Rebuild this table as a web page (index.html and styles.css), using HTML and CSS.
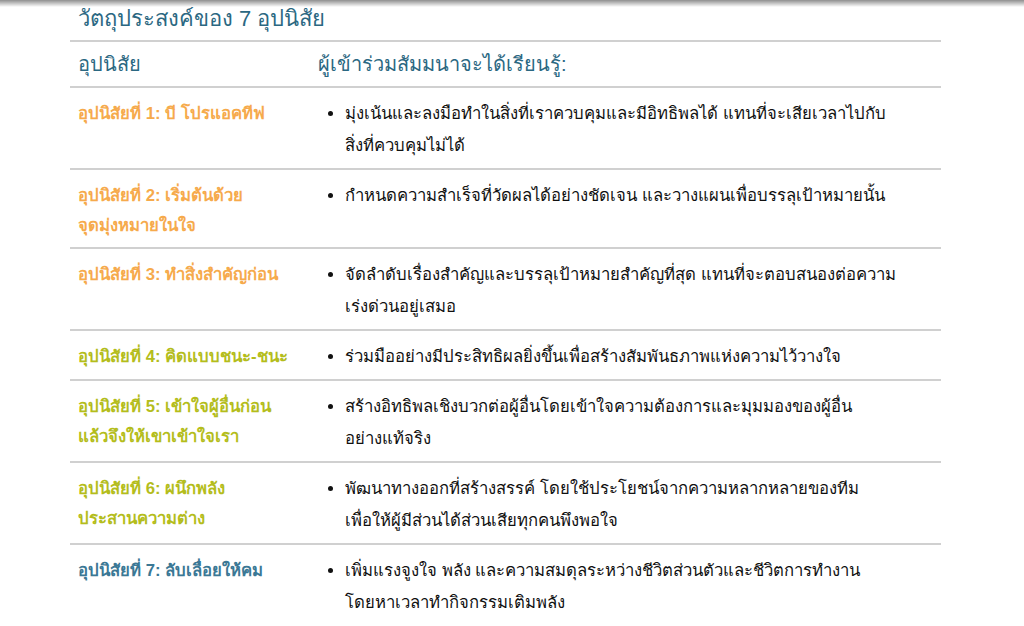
FILE: index.html
```html
<!DOCTYPE html>
<html lang="th">
<head>
<meta charset="utf-8">
<link rel="stylesheet" href="styles.css">
</head>
<body>
<div class="topshadow"></div>
<main class="wrap">
  <h2 class="title">วัตถุประสงค์ของ 7 อุปนิสัย</h2>
  <table class="habits">
    <thead>
      <tr><th class="c1">อุปนิสัย</th><th class="c2">ผู้เข้าร่วมสัมมนาจะได้เรียนรู้:</th></tr>
    </thead>
    <tbody>
      <tr><td class="c1 orange">อุปนิสัยที่ 1: บี โปรแอคทีฟ</td><td class="c2"><ul><li>มุ่งเน้นและลงมือทำในสิ่งที่เราควบคุมและมีอิทธิพลได้ แทนที่จะเสียเวลาไปกับ<br>สิ่งที่ควบคุมไม่ได้</li></ul></td></tr>
      <tr><td class="c1 orange">อุปนิสัยที่ 2: เริ่มต้นด้วย<br>จุดมุ่งหมายในใจ</td><td class="c2"><ul><li>กำหนดความสำเร็จที่วัดผลได้อย่างชัดเจน และวางแผนเพื่อบรรลุเป้าหมายนั้น</li></ul></td></tr>
      <tr><td class="c1 orange">อุปนิสัยที่ 3: ทำสิ่งสำคัญก่อน</td><td class="c2"><ul><li>จัดลำดับเรื่องสำคัญและบรรลุเป้าหมายสำคัญที่สุด แทนที่จะตอบสนองต่อความ<br>เร่งด่วนอยู่เสมอ</li></ul></td></tr>
      <tr><td class="c1 lime">อุปนิสัยที่ 4: คิดแบบชนะ-ชนะ</td><td class="c2"><ul><li>ร่วมมืออย่างมีประสิทธิผลยิ่งขึ้นเพื่อสร้างสัมพันธภาพแห่งความไว้วางใจ</li></ul></td></tr>
      <tr><td class="c1 lime">อุปนิสัยที่ 5: เข้าใจผู้อื่นก่อน<br>แล้วจึงให้เขาเข้าใจเรา</td><td class="c2"><ul><li>สร้างอิทธิพลเชิงบวกต่อผู้อื่นโดยเข้าใจความต้องการและมุมมองของผู้อื่น<br>อย่างแท้จริง</li></ul></td></tr>
      <tr><td class="c1 lime">อุปนิสัยที่ 6: ผนึกพลัง<br>ประสานความต่าง</td><td class="c2"><ul><li>พัฒนาทางออกที่สร้างสรรค์ โดยใช้ประโยชน์จากความหลากหลายของทีม<br>เพื่อให้ผู้มีส่วนได้ส่วนเสียทุกคนพึงพอใจ</li></ul></td></tr>
      <tr><td class="c1 blue">อุปนิสัยที่ 7: ลับเลื่อยให้คม</td><td class="c2"><ul><li>เพิ่มแรงจูงใจ พลัง และความสมดุลระหว่างชีวิตส่วนตัวและชีวิตการทำงาน<br>โดยหาเวลาทำกิจกรรมเติมพลัง</li></ul></td></tr>
    </tbody>
  </table>
</main>
</body>
</html>
```

FILE: styles.css
```css
html, body {
  margin: 0;
  padding: 0;
  background: #ffffff;
}
body {
  font-family: "Liberation Sans", "Noto Sans", sans-serif;
  color: #111;
}
.topshadow {
  position: absolute;
  left: 0;
  top: 0;
  width: 100%;
  height: 7px;
  background: linear-gradient(to bottom, #8f8f8f, rgba(255,255,255,0));
}
.wrap {
  padding-left: 70px;
  width: 871px;
}
.title {
  margin: 0;
  padding: 4px 0 0 8px;
  height: 36px;
  font-size: 22px;
  font-weight: normal;
  color: #2b6882;
  line-height: 30px;
}
.habits {
  width: 871px;
  border-collapse: collapse;
}
.habits tr {
  border-top: 2px solid #d0d0d0;
}
.habits thead tr {
  border-bottom: 2px solid #d0d0d0;
}
.habits th {
  text-align: left;
  font-weight: normal;
  font-size: 20px;
  color: #2b6882;
  padding: 7px 8px;
  line-height: 30px;
}
.habits td {
  vertical-align: top;
  padding: 10px 8px 6px;
  font-size: 16.7px;
  line-height: 32px;
}
.habits .c1 {
  width: 224px;
}
.habits td.c1 {
  font-weight: bold;
  line-height: 30px;
  padding-top: 11px;
}
.orange { color: #f6aa4c; }
.lime { color: #b4bd1c; }
.blue { color: #3b7895; }
.habits ul {
  margin: 0;
  padding: 0 0 0 27px;
}
.habits li {
  color: #111;
}
```
